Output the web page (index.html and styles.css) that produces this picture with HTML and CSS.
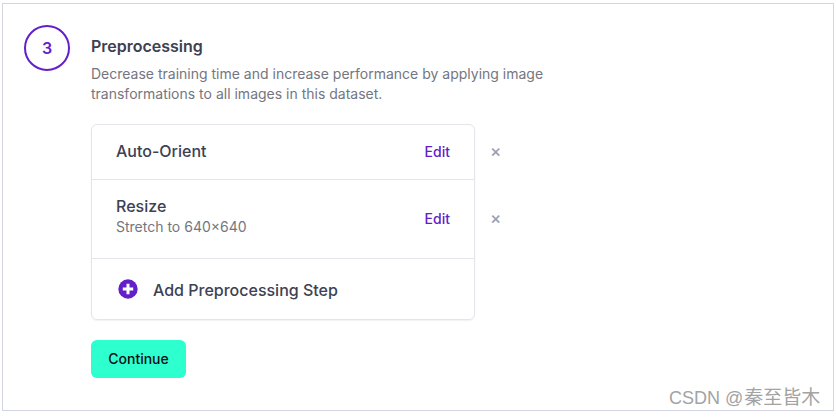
FILE: index.html
```html
<!DOCTYPE html>
<html lang="en">
<head>
    <meta charset="UTF-8">
    <title>Preprocessing</title>
    <link rel="stylesheet" href="styles.css">
</head>
<body>
    <div class="panel">
        <div class="step-number">3</div>
        <div class="step-body">
            <h2>Preprocessing</h2>
            <p class="description">Decrease training time and increase performance by applying image transformations to all images in this dataset.</p>
            <div class="steps-row">
                <div class="card">
                    <div class="card-row first-row">
                        <div class="row-title">Auto-Orient</div>
                        <a class="edit">Edit</a>
                    </div>
                    <div class="card-row second-row">
                        <div class="row-text">
                            <div class="row-title">Resize</div>
                            <div class="row-sub">Stretch to 640×640</div>
                        </div>
                        <a class="edit">Edit</a>
                    </div>
                    <div class="add-row">
                        <svg class="plus" width="20" height="20" viewBox="0 0 20 20">
                            <circle cx="10" cy="10" r="9.7" fill="#6320c8"/>
                            <path d="M10 4.8v10.4M4.8 10h10.4" stroke="#fff" stroke-width="3"/>
                        </svg>
                        <span class="add-label">Add Preprocessing Step</span>
                    </div>
                </div>
                <div class="removers">
                    <div class="remove first-remove">×</div>
                    <div class="remove second-remove">×</div>
                </div>
            </div>
            <button class="continue" type="button">Continue</button>
        </div>
    </div>
    <div class="watermark">CSDN @<span class="watermark-name">秦至皆木</span></div>
</body>
</html>
```

FILE: styles.css
```css
html, body {
    height: 100%;
}
body {
    margin: 0;
    background-color: #fff;
    font-family: Inter, "Noto Sans CJK SC", sans-serif;
    overflow: hidden;
}
.panel {
    display: flex;
    box-sizing: border-box;
    height: 408px;
    margin: 3px 2px 0 2px;
    padding: 21px 0 0 21px;
    border: 1px solid #d4d5e2;
    background-color: #fff;
}
.step-number {
    flex: none;
    box-sizing: border-box;
    width: 46px;
    height: 46px;
    border: 2px solid #6320c8;
    border-radius: 50%;
    color: #6320c8;
    font-size: 16px;
    font-weight: 600;
    line-height: 42px;
    text-align: center;
}
.step-body {
    margin-left: 21px;
}
h2 {
    margin: 11px 0 0 0;
    color: #3d4152;
    font-size: 16px;
    font-weight: 600;
    line-height: 20px;
}
.description {
    width: 470px;
    margin: 8px 0 0 0;
    color: #74767f;
    font-size: 14px;
    line-height: 20px;
}
.steps-row {
    display: flex;
    margin-top: 20px;
}
.card {
    box-sizing: border-box;
    width: 384px;
    height: 196px;
    border: 1px solid #e4e5ea;
    border-radius: 6px;
    box-shadow: 0 1px 2px rgba(0, 0, 0, 0.06);
}
.card-row {
    display: flex;
    box-sizing: border-box;
    align-items: center;
    justify-content: space-between;
    padding: 0 24px 2px 24px;
    border-bottom: 1px solid #e4e5ea;
}
.first-row {
    height: 55px;
}
.second-row {
    height: 79px;
}
.row-text {
    margin-bottom: 4px;
}
.row-title {
    color: #3d4152;
    font-size: 16px;
    font-weight: 500;
    line-height: 22px;
}
.row-sub {
    color: #74767f;
    font-size: 14px;
    line-height: 20px;
}
.edit {
    color: #6320c8;
    font-size: 14px;
    font-weight: 500;
}
.add-row {
    display: flex;
    align-items: center;
    height: 60px;
    padding-left: 26px;
    color: #3d4152;
    font-size: 16px;
    font-weight: 500;
}
.plus {
    margin-right: 15px;
}
.add-label {
    margin-top: 2px;
}
.removers {
    margin-left: 15px;
    color: #9a9fb5;
    font-size: 17px;
    font-weight: 500;
    line-height: 20px;
}
.first-remove {
    margin-top: 17px;
}
.second-remove {
    margin-top: 47px;
}
.continue {
    display: block;
    width: 95px;
    height: 38px;
    margin-top: 20px;
    padding: 0 0 2px 0;
    border: none;
    border-radius: 6px;
    background-color: #2effcf;
    color: #0c0c14;
    font-family: inherit;
    font-size: 14px;
    font-weight: 500;
}
.watermark {
    position: absolute;
    left: 669px;
    top: 387px;
    color: #a3a3a3;
    font-family: "Liberation Sans", "Noto Sans CJK SC", sans-serif;
    font-size: 18px;
    line-height: 22px;
}
.watermark-name {
    font-size: 19px;
    margin-left: 1px;
}
```
